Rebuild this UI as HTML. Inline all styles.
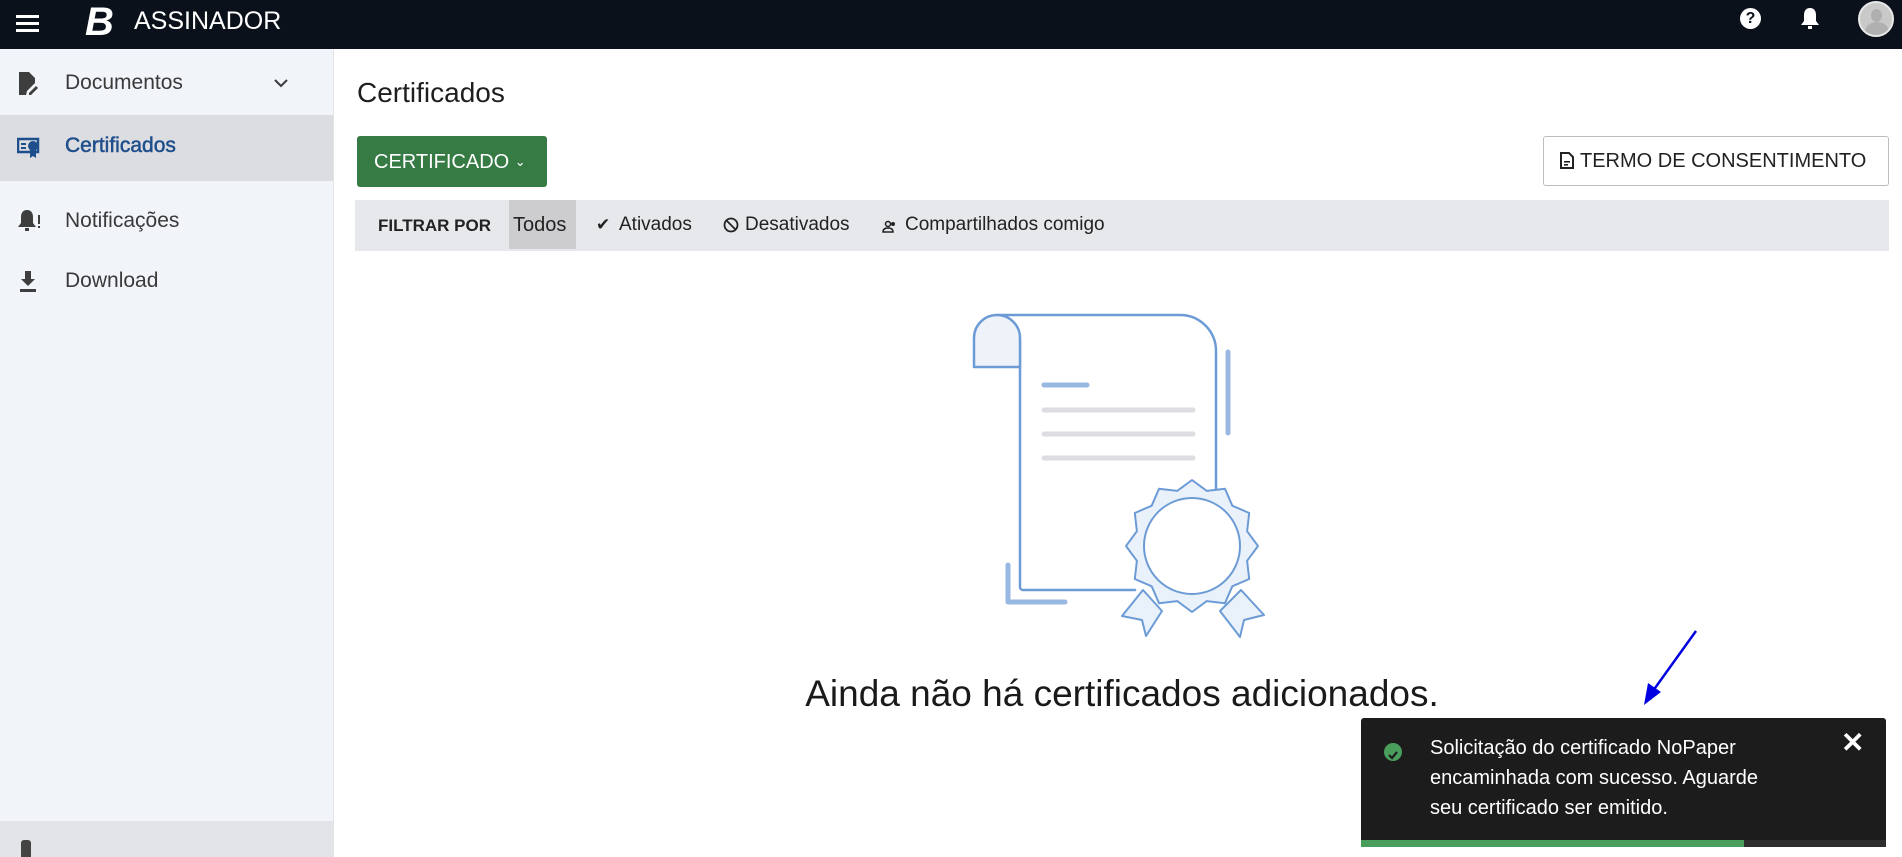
<!DOCTYPE html>
<html><head><meta charset="utf-8"><style>
*{margin:0;padding:0;box-sizing:border-box}
body{width:1902px;height:857px;overflow:hidden;background:#fff;font-family:"Liberation Sans",sans-serif;position:relative;color:#222}
.top{position:absolute;left:0;top:0;width:1902px;height:49px;background:#0b111a}
.side{position:absolute;left:0;top:49px;width:334px;height:808px;background:#f1f4f9;border-right:1px solid #e2e4e8}
.item{position:absolute;left:0;width:333px;height:60px;display:flex;align-items:center;font-size:21px;color:#3a3a3a}
.item span{position:absolute;left:65px}
.item svg{position:absolute;left:17px}
.abs{position:absolute}
</style></head><body>
<div class="top">
 <div class="abs" style="left:16px;top:15px;width:23px;height:3px;background:#fff;box-shadow:0 7px 0 #fff,0 14px 0 #fff"></div>
 <div class="abs" style="left:85px;top:2px;color:#fff;font-size:40px;font-weight:bold;font-style:italic;line-height:40px">B</div>
 <div class="abs" style="left:134px;top:6px;color:#fff;font-size:25px;line-height:30px">ASSINADOR</div>
 <div class="abs" style="left:1740px;top:8px;width:21px;height:21px;border-radius:50%;background:#fff;color:#0b111a;font-weight:bold;font-size:16px;text-align:center;line-height:21px">?</div>
 <svg class="abs" style="left:1799px;top:6px" width="22" height="26" viewBox="0 0 22 26"><path d="M11 2c-4 0-6 3-6 7v6l-3 4h18l-3-4V9c0-4-2-7-6-7z" fill="#fff"/><rect x="9" y="20" width="4" height="3" fill="#fff"/></svg>
 <div class="abs" style="left:1858px;top:1px;width:36px;height:36px;border-radius:50%;background:#c9c9c9;border:2px solid #e8e8e8;overflow:hidden"><div class="abs" style="left:11px;top:6px;width:11px;height:13px;border-radius:50%;background:#b0b0b0"></div><div class="abs" style="left:5px;top:19px;width:24px;height:20px;border-radius:50% 50% 0 0;background:#b0b0b0"></div></div>
</div>
<div class="side">
 <div class="item" style="top:4px"><svg width="22" height="26" viewBox="0 0 22 26"><path d="M2 2h10l6 6v5l-8 8-1 4H2z" fill="#3e3e3e"/><path d="M12 23l7-7 2 2-7 7h-2z" fill="#3e3e3e"/></svg><span>Documentos</span><svg style="left:273px" width="16" height="10" viewBox="0 0 16 10"><path d="M2 2l6 6 6-6" stroke="#3a3a3a" stroke-width="2" fill="none"/></svg></div>
 <div class="item" style="top:66px;height:66px;background:#dcdde1;color:#1f4e8c"><svg width="24" height="24" viewBox="0 0 24 24"><rect x="1" y="3" width="20" height="13" fill="none" stroke="#1f4e8c" stroke-width="2.5"/><rect x="4" y="7" width="5" height="2" fill="#1f4e8c"/><rect x="4" y="11" width="5" height="2" fill="#1f4e8c"/><circle cx="16" cy="10" r="5" fill="#1f4e8c"/><path d="M13 14l0 8 3-2 3 2v-8z" fill="#1f4e8c"/></svg><span style="color:#1f4e8c;-webkit-text-stroke:.5px #1f4e8c;top:19px">Certificados</span></div>
 <div class="item" style="top:142px"><svg width="24" height="26" viewBox="0 0 24 26"><path d="M10 2c-4 0-6 3-6 7v6l-3 4h18l-3-4V9c0-4-2-7-6-7z" fill="#3e3e3e"/><rect x="8" y="20" width="4" height="3" fill="#3e3e3e"/><rect x="21" y="7" width="2" height="9" fill="#3e3e3e"/><rect x="21" y="18" width="2" height="2" fill="#3e3e3e"/></svg><span>Notificações</span></div>
 <div class="item" style="top:202px"><svg width="22" height="24" viewBox="0 0 22 24"><path d="M8 2h6v8h4l-7 7-7-7h4z" fill="#3e3e3e"/><rect x="3" y="20" width="16" height="3" fill="#3e3e3e"/></svg><span>Download</span></div>
 <div class="abs" style="left:0;top:772px;width:333px;height:36px;background:#e3e4e7"><div class="abs" style="left:21px;top:19px;width:10px;height:17px;background:#444;border-radius:3px 3px 0 0"></div></div>
</div>

<div class="abs" style="left:357px;top:77px;font-size:28px;color:#1e1e1e">Certificados</div>
<div class="abs" style="left:357px;top:136px;width:190px;height:51px;background:#367a44;border-radius:3px;color:#fff;font-size:20px;line-height:51px;padding-left:17px">CERTIFICADO <span style="font-size:13px;vertical-align:2px">&#8964;</span></div>
<div class="abs" style="left:1543px;top:136px;width:346px;height:50px;border:1px solid #bdbdbd;border-radius:3px;font-size:20px;line-height:48px;padding-left:16px;color:#222"><svg style="vertical-align:-2px;margin-right:6px" width="14" height="17" viewBox="0 0 14 17"><path d="M1 1h8l4 4v11H1z" fill="none" stroke="#222" stroke-width="2"/><rect x="4" y="9" width="6" height="1.6" fill="#222"/><rect x="4" y="12" width="4" height="1.6" fill="#222"/></svg>TERMO DE CONSENTIMENTO</div>

<div class="abs" style="left:355px;top:200px;width:1534px;height:51px;background:#e7e8eb;font-size:19px;color:#222">
 <div class="abs" style="left:23px;top:16px;font-weight:bold;font-size:17px">FILTRAR POR</div>
 <div class="abs" style="left:154px;top:0;width:67px;height:49px;background:#cdcdd0"></div>
 <div class="abs" style="left:158px;top:14px;font-size:20px">Todos</div>
 <div class="abs" style="left:241px;top:15px;font-size:17px">✔</div>
 <div class="abs" style="left:264px;top:14px">Ativados</div>
 <div class="abs" style="left:368px;top:17px"><svg width="16" height="16" viewBox="0 0 16 16"><circle cx="8" cy="8" r="6.5" stroke="#222" stroke-width="1.8" fill="none"/><path d="M3.5 3.5l9 9" stroke="#222" stroke-width="1.8"/></svg></div>
 <div class="abs" style="left:390px;top:14px">Desativados</div>
 <div class="abs" style="left:527px;top:18px"><svg width="16" height="14" viewBox="0 0 16 14"><circle cx="6" cy="4" r="2.5" fill="none" stroke="#222" stroke-width="1.5"/><path d="M1 12c0-3 2-4 5-4s5 1 5 4z" fill="none" stroke="#222" stroke-width="1.5"/><circle cx="11" cy="4" r="2" fill="#222"/></svg></div>
 <div class="abs" style="left:550px;top:14px">Compartilhados comigo</div>
</div>

<svg class="abs" style="left:950px;top:280px" width="350" height="380" viewBox="0 0 350 380">
 <g fill="none" stroke-linecap="round" stroke-linejoin="round">
 <path d="M47 35H230a36 36 0 0 1 36 36V240M70 60V307a3 3 0 0 0 3 3H185" stroke="#6d9bd6" stroke-width="2.5"/>
 <path d="M24 87V58a23 23 0 0 1 46 0V87z" fill="#eef3fa" stroke="#6d9bd6" stroke-width="2.5"/>
 <path d="M278 72V153M58 285V322H115" stroke="#98b7e2" stroke-width="5"/>
 <path d="M94 105H137" stroke="#98b7e2" stroke-width="5"/>
 <path d="M94 130H243M94 154H243M94 178H243" stroke="#dddee2" stroke-width="5"/>
 <path d="M193 310L212 331L196 356L192 340L172 336Z M291 310L314 335L294 340L290 357L270 331Z" fill="#e9f2fa" stroke="#6d9bd6" stroke-width="2"/>
 <polygon points="308,266 297.1,280.8 299.2,299 282.3,306.3 275,323.2 256.8,321.1 242,332 227.2,321.1 209,323.2 201.7,306.3 184.8,299 186.9,280.8 176,266 186.9,251.2 184.8,233 201.7,225.7 209,208.8 227.2,210.9 242,200 256.8,210.9 275,208.8 282.3,225.7 299.2,233 297.1,251.2" fill="#e9f2fa" stroke="#6d9bd6" stroke-width="2"/>
 <circle cx="242" cy="266" r="48" fill="#fff" stroke="#6d9bd6" stroke-width="2"/>
 </g>
</svg>

<div class="abs" style="left:0;width:2244px;top:673px;text-align:center;font-size:37px;color:#1a1a1a">Ainda não há certificados adicionados.</div>

<svg class="abs" style="left:1630px;top:625px" width="80" height="85" viewBox="0 0 80 85"><path d="M66 6L20 70" stroke="#0000e0" stroke-width="2.5"/><path d="M14 80L18 58L31 67Z" fill="#0000e0"/></svg>

<div class="abs" style="left:1361px;top:718px;width:525px;height:129px;background:#1c1c1c;border-radius:3px;color:#fff;font-size:20px;line-height:30px">
 <div class="abs" style="left:23px;top:25px;width:18px;height:18px;border-radius:50%;background:#4a9e5c"><svg width="18" height="18" viewBox="0 0 18 18"><path d="M5 9l3 3 5-6" stroke="#1c1c1c" stroke-width="2.2" fill="none"/></svg></div>
 <div class="abs" style="left:69px;top:15px;width:350px">Solicitação do certificado NoPaper encaminhada com sucesso. Aguarde seu certificado ser emitido.</div>
 <div class="abs" style="left:480px;top:10px;font-size:28px;font-weight:bold">✕</div>
 <div class="abs" style="left:0;top:122px;width:525px;height:7px;background:#2e2e2e"></div>
 <div class="abs" style="left:0;top:122px;width:383px;height:7px;background:#4a9e5c"></div>
</div>
</body></html>
